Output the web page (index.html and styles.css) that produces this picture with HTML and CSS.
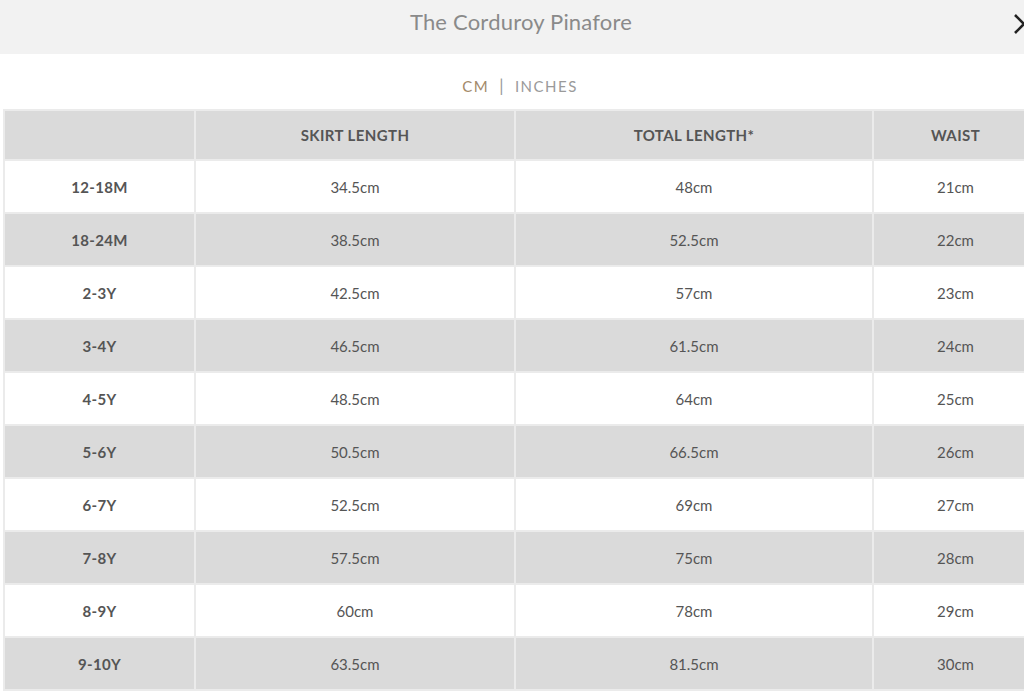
FILE: index.html
```html
<!DOCTYPE html>
<html>
<head>
<meta charset="utf-8">
<link rel="stylesheet" href="styles.css">
</head>
<body>
<div class="header">
  <h1 class="title">The Corduroy Pinafore</h1>
  <svg class="close" width="14" height="24" viewBox="0 0 14 24"><path d="M2 3 L11 12 L2 21" fill="none" stroke="#222" stroke-width="2.6"/></svg>
</div>
<div class="units"><span class="active">CM</span><span class="sep">|</span><span class="inactive">INCHES</span></div>
<table class="chart">
  <colgroup><col class="c1"><col class="c2"><col class="c3"><col class="c4"></colgroup>
  <thead>
    <tr><th></th><th>SKIRT LENGTH</th><th>TOTAL LENGTH*</th><th>WAIST</th></tr>
  </thead>
  <tbody>
    <tr><td class="size">12-18M</td><td>34.5cm</td><td>48cm</td><td>21cm</td></tr>
    <tr><td class="size">18-24M</td><td>38.5cm</td><td>52.5cm</td><td>22cm</td></tr>
    <tr><td class="size">2-3Y</td><td>42.5cm</td><td>57cm</td><td>23cm</td></tr>
    <tr><td class="size">3-4Y</td><td>46.5cm</td><td>61.5cm</td><td>24cm</td></tr>
    <tr><td class="size">4-5Y</td><td>48.5cm</td><td>64cm</td><td>25cm</td></tr>
    <tr><td class="size">5-6Y</td><td>50.5cm</td><td>66.5cm</td><td>26cm</td></tr>
    <tr><td class="size">6-7Y</td><td>52.5cm</td><td>69cm</td><td>27cm</td></tr>
    <tr><td class="size">7-8Y</td><td>57.5cm</td><td>75cm</td><td>28cm</td></tr>
    <tr><td class="size">8-9Y</td><td>60cm</td><td>78cm</td><td>29cm</td></tr>
    <tr><td class="size">9-10Y</td><td>63.5cm</td><td>81.5cm</td><td>30cm</td></tr>
  </tbody>
</table>
</body>
</html>
```
FILE: styles.css
```css
html, body {
  margin: 0;
  padding: 0;
  background: #fff;
  overflow: hidden;
  width: 1024px;
}
body {
  font-family: "Lato", "Liberation Sans", sans-serif;
  color: #555;
}
.header {
  height: 54px;
  background: #f2f2f2;
  display: flex;
  align-items: center;
  justify-content: center;
  position: relative;
  padding-left: 18px;
}
.title {
  margin: 0;
  font-weight: 400;
  font-size: 22px;
  color: #8a8a8a;
  letter-spacing: 0.2px;
  padding-bottom: 12px;
}
.close {
  position: absolute;
  right: -3px;
  top: 12px;
}
.units {
  display: flex;
  justify-content: center;
  align-items: center;
  gap: 10px;
  height: 45px;
  padding-top: 9px;
  padding-left: 16px;
  font-size: 15px;
  letter-spacing: 1.5px;
}
.active { color: #a3896a; }
.sep { color: #999; font-size: 17px; }
.inactive { color: #9a9a9a; }
.chart {
  margin-left: 3px;
  margin-top: 1px;
  width: 1034px;
  border-collapse: collapse;
  table-layout: fixed;
}
.c1 { width: 191px; }
.c2 { width: 320px; }
.c3 { width: 358px; }
.c4 { width: 165px; }
.chart th, .chart td {
  border: 2px solid #ebebeb;
  text-align: center;
  font-size: 15px;
  color: #555;
  padding: 0;
}
.chart th {
  height: 48px;
  background: #dadada;
  font-weight: 700;
  letter-spacing: 0.4px;
}
.chart td { height: 51px; }
.chart tbody tr:nth-child(even) td { background: #dadada; }
.chart td.size { font-weight: 700; letter-spacing: 0.3px; }
```
